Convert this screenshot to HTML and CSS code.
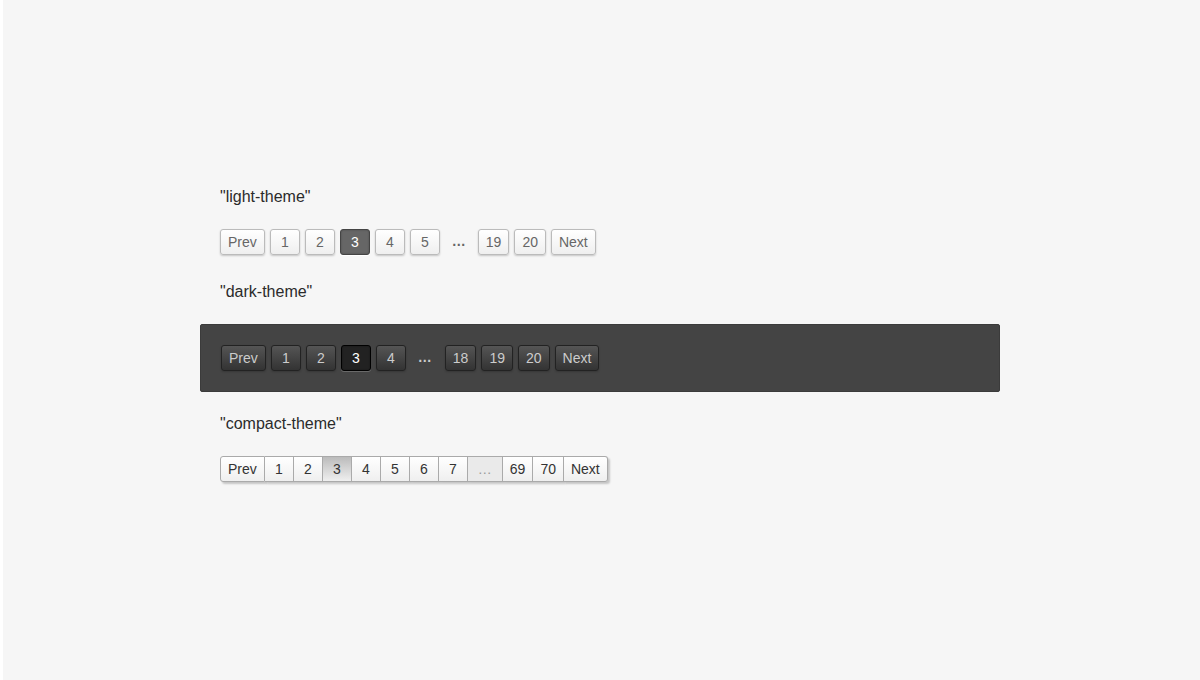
FILE: index.html
```html
<!DOCTYPE html>
<html>
<head>
<meta charset="utf-8">
<link rel="stylesheet" href="styles.css">
</head>
<body>
<div class="demo">
  <div class="label">"light-theme"</div>
  <ul class="pager light-theme">
    <li><a class="prev">Prev</a></li>
    <li><a>1</a></li>
    <li><a>2</a></li>
    <li><span class="current">3</span></li>
    <li><a>4</a></li>
    <li><a>5</a></li>
    <li><span class="ellipse">…</span></li>
    <li><a>19</a></li>
    <li><a>20</a></li>
    <li><a class="next">Next</a></li>
  </ul>

  <div class="label">"dark-theme"</div>
  <div class="dark-box">
    <ul class="pager dark-theme">
      <li><a class="prev">Prev</a></li>
      <li><a>1</a></li>
      <li><a>2</a></li>
      <li><span class="current">3</span></li>
      <li><a>4</a></li>
      <li><span class="ellipse">…</span></li>
      <li><a>18</a></li>
      <li><a>19</a></li>
      <li><a>20</a></li>
      <li><a class="next">Next</a></li>
    </ul>
  </div>

  <div class="label">"compact-theme"</div>
  <ul class="pager compact-theme">
    <li><a class="prev">Prev</a></li>
    <li><a>1</a></li>
    <li><a>2</a></li>
    <li><span class="current">3</span></li>
    <li><a>4</a></li>
    <li><a>5</a></li>
    <li><a>6</a></li>
    <li><a>7</a></li>
    <li><span class="ellipse">…</span></li>
    <li><a>69</a></li>
    <li><a>70</a></li>
    <li><a class="next">Next</a></li>
  </ul>
</div>
</body>
</html>
```

FILE: styles.css
```css
html {
  background: #ffffff;
}
body {
  margin: 0;
  min-height: 680px;
  background: linear-gradient(to right, #ffffff 3px, #f6f6f6 3px);
  font-family: "Liberation Sans", Arial, sans-serif;
  color: #333;
}
.demo {
  width: 800px;
  margin: 0 auto;
  padding-top: 186px;
}
.label {
  font-size: 16px;
  line-height: 20px;
  padding-left: 20px;
  padding-top: 1px;
  margin-bottom: 22px;
  color: #2b2b2b;
}
.pager {
  list-style: none;
  margin: 0;
  padding: 0 0 0 20px;
  display: flex;
  height: 26px;
}
.pager li {
  display: block;
}
.pager a,
.pager span {
  display: block;
  font-size: 14px;
  line-height: 24px;
  text-align: center;
  min-width: 14px;
  padding: 0 7px;
}

/* light */
.light-theme {
  margin-bottom: 26px;
}
.light-theme a,
.light-theme span {
  color: #666;
  border: 1px solid #bbb;
  margin-right: 5px;
  border-radius: 3px;
  box-shadow: 0 1px 2px rgba(0, 0, 0, 0.2);
  background: linear-gradient(to bottom, #ffffff 0%, #efefef 100%);
}
.light-theme .current {
  background: #666;
  color: #fff;
  border-color: #444;
  box-shadow: 0 1px 0 rgba(255, 255, 255, 1), 0 0 2px rgba(0, 0, 0, 0.3) inset;
}
.light-theme .ellipse {
  background: none;
  border: none;
  border-radius: 0;
  box-shadow: none;
  font-weight: bold;
  margin-right: 5px;
}

/* dark */
.dark-box {
  background: #444;
  border: 1px solid #3b3b3b;
  border-radius: 2px;
  padding: 20px;
  margin-bottom: 21px;
}
.dark-theme {
  padding-left: 0;
}
.dark-theme a,
.dark-theme span {
  color: #ccc;
  border: 1px solid #222;
  margin-right: 5px;
  border-radius: 3px;
  box-shadow: 0 1px 2px rgba(0, 0, 0, 0.2);
  background: linear-gradient(to bottom, #555 0%, #333 100%);
}
.dark-theme .current {
  background: #222;
  color: #fff;
  border-color: #000;
  box-shadow: 0 1px 0 rgba(255, 255, 255, 0.2), 0 0 1px 1px rgba(0, 0, 0, 0.1) inset;
}
.dark-theme .ellipse {
  background: none;
  border: none;
  border-radius: 0;
  box-shadow: none;
  font-weight: bold;
  margin-right: 6px;
}

/* compact */
.compact-theme a,
.compact-theme span {
  color: #333;
  border: 1px solid #aaa;
  border-left: none;
  box-shadow: 2px 2px 2px rgba(0, 0, 0, 0.2);
  background: linear-gradient(to bottom, #ffffff 0%, #efefef 100%);
}
.compact-theme li:first-child a {
  border-left: 1px solid #aaa;
  border-radius: 3px 0 0 3px;
}
.compact-theme li:last-child a {
  border-radius: 0 3px 3px 0;
}
.compact-theme .current {
  background: linear-gradient(to bottom, #bbbbbb 0%, #efefef 100%);
}
.compact-theme .ellipse {
  background: #eaeaea;
  padding: 0 10px;
  color: #999;
}
```
